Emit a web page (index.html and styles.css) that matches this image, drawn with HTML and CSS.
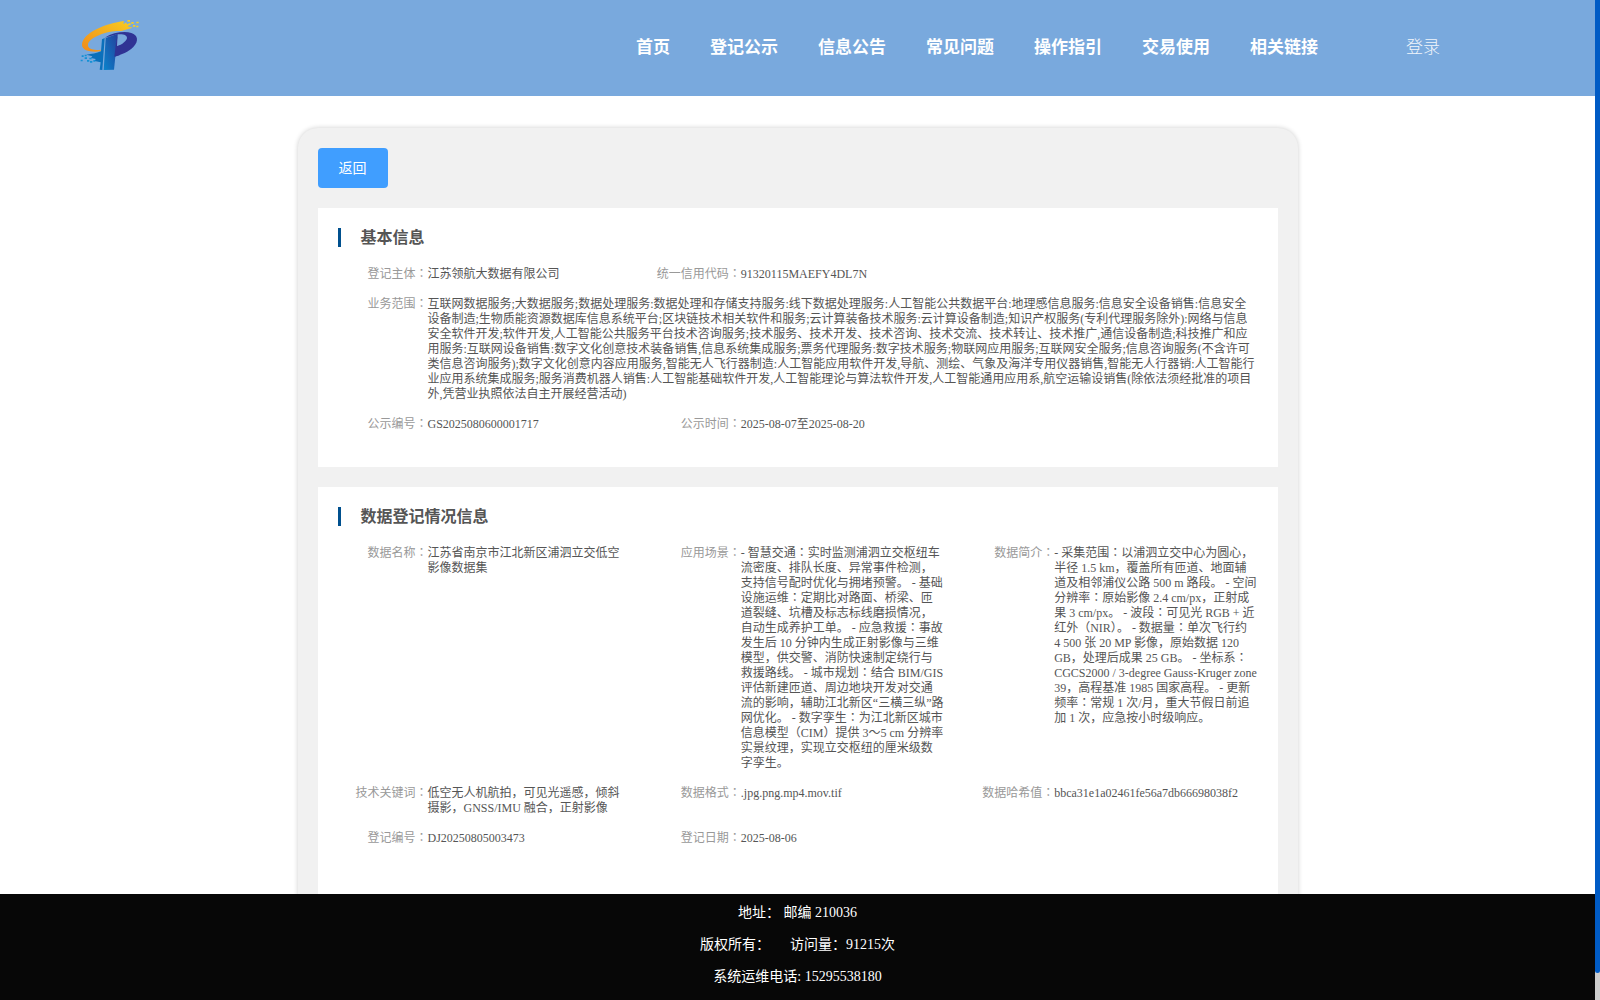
FILE: index.html
```
<!DOCTYPE html>
<html lang="zh-CN">
<head>
    <meta charset="UTF-8">
    <meta name="viewport" content="width=device-width, initial-scale=1.0">
    <title>登记公示</title>
    <link rel="stylesheet" href="styles.css">
</head>
<body>
    <div class="page">
        <!-- Header -->
        <header class="header">
            <svg class="logo" viewBox="0 0 330 288">
                <defs>
                    <linearGradient id="orange" x1="0" y1="1" x2="1" y2="0">
                        <stop offset="0" stop-color="#f08a1c"/>
                        <stop offset="1" stop-color="#f9cd1f"/>
                    </linearGradient>
                    <linearGradient id="blue" x1="0" y1="1" x2="1" y2="0">
                        <stop offset="0" stop-color="#0a83cb"/>
                        <stop offset="1" stop-color="#25409c"/>
                    </linearGradient>
                </defs>
                <path fill="url(#orange)" d="M192 63 C140 70 66 98 66 135 C67 153 94 157 122 154 L122 149 C100 152 82 147 84 133 C88 109 150 90 184 93 L218 83 L203 79 L210 73 L190 71 Z"/>
                <path fill="#f9cd1f" d="M202 60h8v5h-8z M214 66h7v5h-7z M229 65h7v5h-7z M205 70h7v6h-7z M219 75h7v5h-7z M229 77h6v5h-6z M194 68h6v5h-6z"/>
                <path fill="#303394" d="M134 113 C160 97 194 93 214 99 C234 105 237 124 220 141 C206 156 184 164 163 170 L163 142 C180 138 198 126 201 115 C202 105 190 101 171 103 Z"/>
                <path fill="url(#blue)" d="M137 114 L173 101 L162 209 L131 210 Z"/>
                <path fill="#303394" d="M173 101 L171 138 L182 136 L180 165 L163 170 L168 130 Z"/>
                <path fill="#0b70bb" d="M126 118 L134 114 L127 210 L119 209 L122 187 L104 183 L107 177 L93 174 L97 169 L79 164 C94 162 110 160 123 154 Z"/>
                <path fill="#1491d5" d="M65 166h6v5h-6z M74 172h7v5h-7z M62 179h6v5h-6z M81 180h7v5h-7z M74 164h6v5h-6z M88 173h7v5h-7z M90 183h7v5h-7z M100 180h6v5h-6z"/>
            </svg>
            <nav class="nav">
                <a>首页</a>
                <a>登记公示</a>
                <a>信息公告</a>
                <a>常见问题</a>
                <a>操作指引</a>
                <a>交易使用</a>
                <a>相关链接</a>
            </nav>
            <a class="login">登录</a>
        </header>

        <!-- Detail card -->
        <main class="main">
            <div class="card">
                <button class="back">返回</button>

                <section class="panel panel-basic">
                    <h2 class="title">基本信息</h2>
                    <div class="rows">
                        <div class="item">
                            <div class="label">登记主体<i>：</i></div>
                            <div class="value">江苏领航大数据有限公司</div>
                        </div>
                        <div class="item">
                            <div class="label">统一信用代码<i>：</i></div>
                            <div class="value">91320115MAEFY4DL7N</div>
                        </div>
                        <div class="item wide">
                            <div class="label">业务范围<i>：</i></div>
                            <div class="value">互联网数据服务;大数据服务;数据处理服务:数据处理和存储支持服务:线下数据处理服务:人工智能公共数据平台:地理感信息服务:信息安全设备销售:信息安全<br>设备制造;生物质能资源数据库信息系统平台;区块链技术相关软件和服务;云计算装备技术服务:云计算设备制造;知识产权服务(专利代理服务除外):网络与信息<br>安全软件开发;软件开发,人工智能公共服务平台技术咨询服务;技术服务、技术开发、技术咨询、技术交流、技术转让、技术推广,通信设备制造;科技推广和应<br>用服务:互联网设备销售:数字文化创意技术装备销售,信息系统集成服务;票务代理服务:数字技术服务;物联网应用服务;互联网安全服务;信息咨询服务(不含许可<br>类信息咨询服务);数字文化创意内容应用服务,智能无人飞行器制造:人工智能应用软件开发,导航、测绘、气象及海洋专用仪器销售,智能无人行器销:人工智能行<br>业应用系统集成服务;服务消费机器人销售:人工智能基础软件开发,人工智能理论与算法软件开发,人工智能通用应用系,航空运输设销售(除依法须经批准的项目<br>外,凭营业执照依法自主开展经营活动)</div>
                        </div>
                        <div class="item">
                            <div class="label">公示编号<i>：</i></div>
                            <div class="value">GS2025080600001717</div>
                        </div>
                        <div class="item">
                            <div class="label">公示时间<i>：</i></div>
                            <div class="value">2025-08-07至2025-08-20</div>
                        </div>
                    </div>
                </section>

                <section class="panel panel-data">
                    <h2 class="title">数据登记情况信息</h2>
                    <div class="rows">
                        <div class="item">
                            <div class="label">数据名称<i>：</i></div>
                            <div class="value">江苏省南京市江北新区浦泗立交低空<br>影像数据集</div>
                        </div>
                        <div class="item">
                            <div class="label">应用场景<i>：</i></div>
                            <div class="value">- 智慧交通<i>：</i>实时监测浦泗立交枢纽车<br>流密度、排队长度、异常事件检测，<br>支持信号配时优化与拥堵预警。 - 基础<br>设施运维<i>：</i>定期比对路面、桥梁、匝<br>道裂缝、坑槽及标志标线磨损情况，<br>自动生成养护工单。 - 应急救援<i>：</i>事故<br>发生后 10 分钟内生成正射影像与三维<br>模型，供交警、消防快速制定绕行与<br>救援路线。 - 城市规划<i>：</i>结合 BIM/GIS<br>评估新建匝道、周边地块开发对交通<br>流的影响，辅助江北新区“三横三纵”路<br>网优化。 - 数字孪生<i>：</i>为江北新区城市<br>信息模型<i>（</i>CIM<i>）</i>提供 3～5 cm 分辨率<br>实景纹理，实现立交枢纽的厘米级数<br>字孪生。</div>
                        </div>
                        <div class="item">
                            <div class="label">数据简介<i>：</i></div>
                            <div class="value">- 采集范围<i>：</i>以浦泗立交中心为圆心，<br>半径 1.5 km，覆盖所有匝道、地面辅<br>道及相邻浦仪公路 500 m 路段。 - 空间<br>分辨率<i>：</i>原始影像 2.4 cm/px，正射成<br>果 3 cm/px。 - 波段<i>：</i>可见光 RGB + 近<br>红外<i>（</i>NIR<i>）</i>。 - 数据量<i>：</i>单次飞行约<br>4 500 张 20 MP 影像，原始数据 120<br>GB，处理后成果 25 GB。 - 坐标系<i>：</i><br>CGCS2000 / 3-degree Gauss-Kruger zone<br>39，高程基准 1985 国家高程。 - 更新<br>频率<i>：</i>常规 1 次/月，重大节假日前追<br>加 1 次，应急按小时级响应。</div>
                        </div>
                        <div class="item">
                            <div class="label">技术关键词<i>：</i></div>
                            <div class="value">低空无人机航拍，可见光遥感，倾斜<br>摄影，GNSS/IMU 融合，正射影像</div>
                        </div>
                        <div class="item">
                            <div class="label">数据格式<i>：</i></div>
                            <div class="value">.jpg.png.mp4.mov.tif</div>
                        </div>
                        <div class="item">
                            <div class="label">数据哈希值<i>：</i></div>
                            <div class="value">bbca31e1a02461fe56a7db66698038f2</div>
                        </div>
                        <div class="item">
                            <div class="label">登记编号<i>：</i></div>
                            <div class="value">DJ20250805003473</div>
                        </div>
                        <div class="item">
                            <div class="label">登记日期<i>：</i></div>
                            <div class="value">2025-08-06</div>
                        </div>
                    </div>
                </section>
            </div>
        </main>

        <!-- Footer -->
        <footer class="footer">
            <p>地址： 邮编 210036</p>
            <p>版权所有：<span class="visits">访问量：91215次</span></p>
            <p>系统运维电话: 15295538180</p>
        </footer>
    </div>
    <div class="scrollbar"><div class="thumb"></div></div>
</body>
</html>
```
FILE: styles.css
```
* {
    margin: 0;
    padding: 0;
    box-sizing: border-box;
}

body {
    display: flex;
    height: 1000px;
    overflow: hidden;
    background: #fff;
    font-family: "Liberation Serif", "Noto Sans CJK SC", serif;
    font-size: 12px;
    color: #555;
}

.page {
    flex: 1;
    display: flex;
    flex-direction: column;
}

/* Header */
.header {
    height: 96px;
    display: flex;
    padding-left: 60px;
    background: #79a9dd;
    color: #fff;
    font-size: 17px;
    line-height: 24px;
}

.logo {
    width: 110px;
    height: 96px;
}

.nav {
    display: flex;
    gap: 40px;
    margin-left: 466px;
    padding-top: 36px;
    font-weight: bold;
}

.login {
    margin-left: 88px;
    padding-top: 36px;
    font-weight: 300;
    opacity: 0.9;
}

/* Detail card */
.main {
    flex: 1;
    min-height: 0;
    overflow: hidden;
    padding-top: 32px;
}

.card {
    width: 1000px;
    height: 860px;
    margin: 0 auto;
    padding: 20px;
    border-radius: 20px;
    background: #f1f1f1;
    box-shadow: 0 0 5px rgba(0, 0, 0, 0.2);
}

.back {
    display: block;
    width: 70px;
    height: 40px;
    border: none;
    border-radius: 4px;
    background: #409eff;
    color: #fff;
    font-family: inherit;
    font-size: 14px;
    padding-bottom: 2px;
    margin-bottom: 20px;
}

.panel {
    padding: 20px 0 0 20px;
    margin-bottom: 20px;
    background: #fff;
}

.panel-basic {
    height: 259px;
}

.panel-data {
    height: 460px;
}

.title {
    height: 19px;
    border-left: 3px solid #00508e;
    padding-left: 20px;
    font-size: 16px;
    line-height: 20px;
    margin-bottom: 20px;
}

.rows {
    display: grid;
    grid-template-columns: repeat(3, 1fr);
    row-gap: 15px;
}

.item {
    display: flex;
    min-width: 0;
    line-height: 15px;
}

.wide {
    grid-column: 1 / 4;
}

/* the licence row leaves the third column empty */
.panel-basic .item:nth-child(2) {
    grid-column: 2 / 4;
}

.label {
    flex: none;
    width: 90px;
    text-align: right;
    white-space: nowrap;
    color: #999;
}

/* centred full-width punctuation */
.item i {
    font-family: "Noto Sans CJK TC", sans-serif;
    font-style: normal;
    line-height: 1;
    -webkit-locale: "zh-TW";
}

.value {
    white-space: nowrap;
}

/* Footer */
.footer {
    height: 106px;
    padding-top: 3px;
    background: #070707;
    color: #fff;
    font-size: 14px;
    line-height: 32px;
    text-align: center;
}

.visits {
    margin-left: 20px;
}

/* Scrollbar */
.scrollbar {
    width: 5px;
    background: #ccc;
}

.thumb {
    height: 973px;
    border-radius: 0 0 3px 3px;
    background: #005bc5;
}
```
